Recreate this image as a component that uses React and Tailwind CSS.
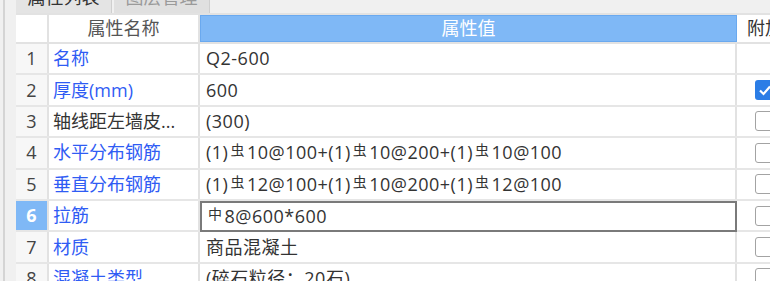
import React from 'react'

const font = { fontFamily: '"Open Sans", "Noto Sans CJK SC", sans-serif' }

function Rebar({ ch = '虫' }) {
  return <span className="text-[14px] relative -top-[3px] mx-[2px]">{ch}</span>
}

const rows = [
  { n: 1, name: '名称', blue: true, value: 'Q2-600', box: null },
  { n: 2, name: '厚度(mm)', blue: true, value: '600', box: 'on' },
  { n: 3, name: '轴线距左墙皮...', blue: false, value: '(300)', box: 'off' },
  {
    n: 4, name: '水平分布钢筋', blue: true, box: 'off',
    value: <>(1)<Rebar />10@100+(1)<Rebar />10@200+(1)<Rebar />10@100</>,
  },
  {
    n: 5, name: '垂直分布钢筋', blue: true, box: 'off',
    value: <>(1)<Rebar />12@100+(1)<Rebar />10@200+(1)<Rebar />12@100</>,
  },
  { n: 6, name: '拉筋', blue: true, value: <><Rebar ch="中" />8@600*600</>, box: 'off', sel: true },
  { n: 7, name: '材质', blue: true, value: '商品混凝土', box: 'off' },
  { n: 8, name: '混凝土类型', blue: true, value: '(碎石粒径：20石)', box: 'off' },
]

function Check({ on }) {
  if (on) {
    return (
      <div className="w-[20px] h-[20px] rounded-[3px] bg-[#2b7de6] flex items-center justify-center shrink-0">
        <svg width="14" height="14" viewBox="0 0 14 14">
          <path d="M2 7.5 L5.5 11 L12 3.5" fill="none" stroke="white" strokeWidth="2.2" />
        </svg>
      </div>
    )
  }
  return <div className="w-[20px] h-[20px] rounded-[3px] border-[1.5px] border-[#a3a3a3] bg-white shrink-0" />
}

export default function App() {
  return (
    <div className="w-[770px] h-[281px] overflow-hidden bg-[#f0f0f0] flex text-[18px]" style={font}>
      <div className="w-[16px] shrink-0 pl-[3px]">
        <div className="h-full border-l-2 border-[#d4d4d4]" />
      </div>
      <div className="flex-1 flex flex-col min-w-0">
        <div className="h-[13px] flex shrink-0 overflow-hidden gap-[2px]">
          <div className="w-[96px] bg-[#e4e4e4] border-r border-[#cfcfcf] flex justify-center">
            <span className="-mt-[15px] text-[#333] leading-[24px]">属性列表</span>
          </div>
          <div className="w-[96px] bg-[#e0e0e0] border-r border-[#cfcfcf] flex justify-center">
            <span className="-mt-[15px] text-[#9a9a9a] leading-[24px]">图层管理</span>
          </div>
        </div>
        <div className="flex-1 bg-white border-t-2 border-[#e2e2e2]">
          <div className="flex h-[29px] border-b-2 border-[#e2e2e2]">
            <div className="w-[33px] shrink-0 border-r-2 border-[#e2e2e2]" />
            <div className="w-[151px] shrink-0 border-r-2 border-[#e2e2e2] flex items-center justify-center text-[#555]">属性名称</div>
            <div className="w-[537px] shrink-0 bg-[#7fb8f6] border border-[#6aa9ef] flex items-center justify-center text-white">属性值</div>
            <div className="flex-1 flex items-center pl-[10px] text-[#333] whitespace-nowrap">附加</div>
          </div>
          {rows.map(r => (
            <div key={r.n} className="flex h-[31.4px] border-b-2 border-[#e6e6e6]">
              <div className={`w-[33px] shrink-0 border-r-2 border-[#e2e2e2] flex items-center justify-center ${r.sel ? 'bg-[#7fb8f6] text-white font-bold' : 'bg-[#f7f7f7] text-[#444]'}`}>{r.n}</div>
              <div className={`w-[151px] shrink-0 border-r-2 border-[#e2e2e2] flex items-center pl-[4px] whitespace-nowrap ${r.blue ? 'text-[#2f5cf4]' : 'text-[#333]'}`}>{r.name}</div>
              {r.sel ? (
                <div className="w-[537px] shrink-0 border-2 border-[#7a7a7a] -mb-[2px] flex items-center whitespace-nowrap tracking-[0.5px] text-[#333] pl-[4px]">{r.value}</div>
              ) : (
                <div className="w-[537px] shrink-0 border-r-2 border-[#e2e2e2] flex items-center whitespace-nowrap tracking-[0.5px] text-[#333] pl-[6px]">{r.value}</div>
              )}
              <div className="flex-1 flex items-center pl-[18px]">
                {r.box && <Check on={r.box === 'on'} />}
              </div>
            </div>
          ))}
        </div>
      </div>
    </div>
  )
}
